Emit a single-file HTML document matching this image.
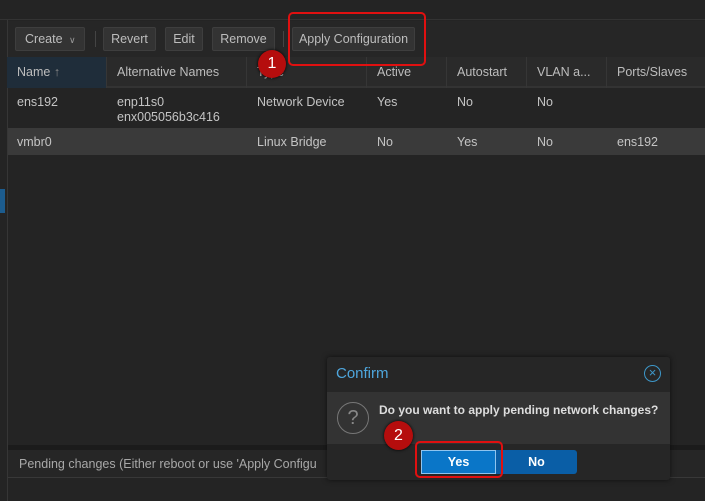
<!DOCTYPE html>
<html><head><style>
*{box-sizing:border-box;margin:0;padding:0}
body{width:705px;height:501px;background:#242424;font-family:"Liberation Sans",sans-serif;font-size:13px;color:#c8c8c8;position:relative;overflow:hidden}
.a{position:absolute}
.btn{position:absolute;top:27px;height:24px;border:1px solid #3e3e3e;background:#333;border-radius:2px;color:#bdbdbd;font-size:12.5px;line-height:22px;text-align:center}
.hd{position:absolute;top:57px;height:31px;line-height:31px;padding-left:10px;color:#bdbdbd;border-right:1px solid #363636;font-size:12.5px}
.c{position:absolute;padding-left:10px;font-size:12.5px;color:#c4c4c4}
</style></head><body>
<div class="a" style="left:0;top:0;width:705px;height:20px;background:#242424;border-bottom:1px solid #333"></div>
<div class="a" style="left:7px;top:20px;width:1px;height:481px;background:#363636"></div>
<div class="a" style="left:0;top:189px;width:5px;height:24px;background:#1c5c8e"></div>
<div class="a" style="left:8px;top:21px;width:697px;height:36px;background:#262626"></div>
<div class="btn" style="left:15px;width:70px;text-align:left;padding-left:9px">Create <span style="font-size:9px;color:#999;margin-left:3px">&#8744;</span></div>
<div class="a" style="left:95px;top:31px;width:1px;height:16px;background:#444"></div>
<div class="btn" style="left:103px;width:53px">Revert</div>
<div class="btn" style="left:165px;width:38px">Edit</div>
<div class="btn" style="left:212px;width:63px">Remove</div>
<div class="a" style="left:283px;top:31px;width:1px;height:16px;background:#444"></div>
<div class="btn" style="left:292px;width:123px">Apply Configuration</div>
<div class="a" style="left:8px;top:57px;width:697px;height:31px;background:#2a2a2a;border-bottom:2px solid #333"></div>
<div class="hd" style="left:7px;width:100px;background:#1f2d3a">Name <span style="color:#888">&#8593;</span></div>
<div class="hd" style="left:107px;width:140px">Alternative Names</div>
<div class="hd" style="left:247px;width:120px">Type</div>
<div class="hd" style="left:367px;width:80px">Active</div>
<div class="hd" style="left:447px;width:80px">Autostart</div>
<div class="hd" style="left:527px;width:80px">VLAN a...</div>
<div class="hd" style="left:607px;width:98px;border:none">Ports/Slaves</div>
<div class="c" style="left:7px;top:95px">ens192</div>
<div class="c" style="left:107px;top:95px;line-height:15px">enp11s0<br>enx005056b3c416</div>
<div class="c" style="left:247px;top:95px">Network Device</div>
<div class="c" style="left:367px;top:95px">Yes</div>
<div class="c" style="left:447px;top:95px">No</div>
<div class="c" style="left:527px;top:95px">No</div>
<div class="a" style="left:8px;top:128px;width:697px;height:27px;background:#3a3a3a"></div>
<div class="c" style="left:7px;top:135px">vmbr0</div>
<div class="c" style="left:247px;top:135px">Linux Bridge</div>
<div class="c" style="left:367px;top:135px">No</div>
<div class="c" style="left:447px;top:135px">Yes</div>
<div class="c" style="left:527px;top:135px">No</div>
<div class="c" style="left:607px;top:135px">ens192</div>
<div class="a" style="left:8px;top:445px;width:697px;height:5px;background:#1b1b1b"></div>
<div class="a" style="left:8px;top:450px;width:697px;height:28px;background:#262626;border-bottom:1px solid #383838"></div>
<div class="c" style="left:9px;top:457px;color:#a8a8a8">Pending changes (Either reboot or use 'Apply Configu</div>
<div class="a" style="left:327px;top:357px;width:343px;height:123px;background:#262626;box-shadow:0 0 6px rgba(0,0,0,.6);border-radius:3px;overflow:hidden">
<div class="a" style="left:0;top:0;width:343px;height:35px;background:#262626"></div>
<div class="a" style="left:9px;top:8px;font-size:15px;color:#4ea6dd">Confirm</div>
<div class="a" style="left:317px;top:8px;width:17px;height:17px;border:1px solid #3d97c9;border-radius:50%;color:#3d97c9;font-size:13px;line-height:14px;text-align:center">&#215;</div>
<div class="a" style="left:0;top:35px;width:343px;height:52px;background:#333"></div>
<div class="a" style="left:10px;top:45px;width:32px;height:32px;border:1px solid #777;border-radius:50%;color:#888;font-size:20px;line-height:30px;text-align:center">?</div>
<div class="a" style="left:52px;top:46px;font-size:12px;font-weight:bold;color:#ddd">Do you want to apply pending network changes?</div>
<div class="a" style="left:94px;top:93px;width:75px;height:24px;background:#0a76c8;border:1px solid #8fc4ef;color:#fff;font-weight:bold;font-size:12.5px;line-height:22px;text-align:center">Yes</div>
<div class="a" style="left:169px;top:93px;width:81px;height:24px;background:#0a5ea6;border-radius:0 3px 3px 0;color:#fff;font-weight:bold;font-size:12.5px;line-height:24px;text-align:center">No</div>
</div>
<div class="a" style="left:288px;top:12px;width:138px;height:54px;border:2px solid #e01010;border-radius:5px"></div>
<div class="a" style="left:415px;top:441px;width:88px;height:37px;border:2px solid #e01010;border-radius:5px"></div>
<div class="a" style="left:258px;top:50px;width:28px;height:28px;border-radius:50%;background:#b50d0d;box-shadow:0 0 3px #000;color:#fff;font-size:16px;line-height:28px;text-align:center">1</div>
<div class="a" style="left:384px;top:421px;width:29px;height:29px;border-radius:50%;background:#b50d0d;box-shadow:0 0 3px #000;color:#fff;font-size:16px;line-height:29px;text-align:center">2</div>
</body></html>
